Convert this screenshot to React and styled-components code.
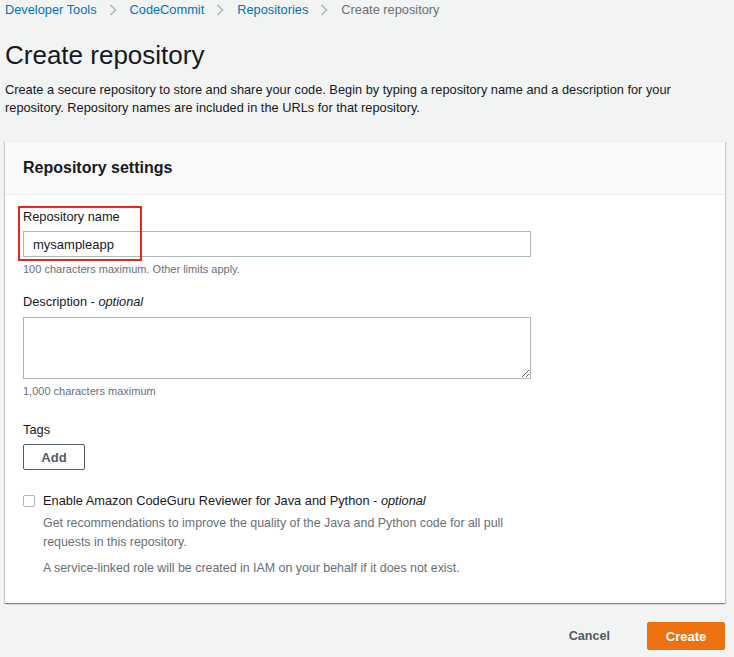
import React from "react";
import styled, { createGlobalStyle } from "styled-components";

const GlobalStyle = createGlobalStyle`
  html, body {
    margin: 0;
    padding: 0;
    background: #f2f3f3;
  }
  body {
    font-family: "Liberation Sans", Arial, sans-serif;
    color: #16191f;
  }
`;

function Chevron() {
  return (
    <svg width="8" height="12" viewBox="0 0 8 12" fill="none">
      <path d="M1.5 1l5 5-5 5" stroke="#aab7b8" strokeWidth="1.5" />
    </svg>
  );
}

function App() {
  const crumbs = ["Developer Tools", "CodeCommit", "Repositories"];
  return (
    <Page>
      <GlobalStyle />
      <Breadcrumbs>
        {crumbs.map((c) => (
          <React.Fragment key={c}>
            <CrumbLink>{c}</CrumbLink>
            <Sep>
              <Chevron />
            </Sep>
          </React.Fragment>
        ))}
        <CrumbCurrent>Create repository</CrumbCurrent>
      </Breadcrumbs>
      <Title>Create repository</Title>
      <Intro>
        Create a secure repository to store and share your code. Begin by
        typing a repository name and a description for your repository.
        Repository names are included in the URLs for that repository.
      </Intro>

      <Panel>
        <PanelHeader>
          <h2>Repository settings</h2>
        </PanelHeader>
        <PanelBody>
          <Highlight />
          <Label>Repository name</Label>
          <TextInput defaultValue="mysampleapp" />
          <Hint>100 characters maximum. Other limits apply.</Hint>

          <Label $top={15}>
            Description - <em>optional</em>
          </Label>
          <TextArea />
          <Hint>1,000 characters maximum</Hint>

          <Label $top={21}>Tags</Label>
          <SecondaryButton>Add</SecondaryButton>

          <CheckRow>
            <CheckBox />
            <CheckText>
              <Label>
                Enable Amazon CodeGuru Reviewer for Java and Python -{" "}
                <em>optional</em>
              </Label>
              <Note>
                Get recommendations to improve the quality of the Java and
                Python code for all pull requests in this repository.
              </Note>
              <Note $top={7}>
                A service-linked role will be created in IAM on your behalf if
                it does not exist.
              </Note>
            </CheckText>
          </CheckRow>
        </PanelBody>
      </Panel>

      <Actions>
        <LinkButton>Cancel</LinkButton>
        <PrimaryButton>Create</PrimaryButton>
      </Actions>
    </Page>
  );
}

export default App;

const Page = styled.div`
  width: 720px;
  padding: 0 0 0 5px;
`;

const Breadcrumbs = styled.nav`
  display: flex;
  align-items: center;
  font-size: 12.8px;
  line-height: 20px;
  height: 20px;
`;

const CrumbLink = styled.span`
  color: #0073bb;
`;

const CrumbCurrent = styled.span`
  color: #687078;
`;

const Sep = styled.span`
  display: flex;
  align-items: center;
  margin: 0 13px 0 12px;
`;

const Title = styled.h1`
  margin: 17px 0 0;
  font-size: 26px;
  line-height: 36px;
  font-weight: 400;
`;

const Intro = styled.p`
  margin: 8px 0 0;
  font-size: 12.8px;
  line-height: 18px;
`;

const Panel = styled.section`
  margin-top: 24px;
  background: #fff;
  border-top: 1px solid #eaeded;
  box-shadow: 0 1px 1px 0 rgba(0, 28, 36, 0.3),
    1px 1px 1px 0 rgba(0, 28, 36, 0.15), -1px 1px 1px 0 rgba(0, 28, 36, 0.15);
`;

const PanelHeader = styled.header`
  height: 52px;
  display: flex;
  align-items: center;
  padding: 0 18px;
  background: #fafafa;
  border-bottom: 1px solid #eaeded;
  h2 {
    margin: 0;
    font-size: 16px;
    font-weight: 700;
  }
`;

const PanelBody = styled.div`
  position: relative;
  padding: 12px 18px 25px;
`;

const Highlight = styled.div`
  position: absolute;
  left: 13px;
  top: 11px;
  width: 120px;
  height: 51px;
  border: 2px solid #e8271c;
  pointer-events: none;
`;

const Label = styled.div`
  margin-top: ${(p) => p.$top || 0}px;
  font-size: 12.8px;
  line-height: 20px;
  color: #16191f;
  em {
    font-style: italic;
  }
`;

const TextInput = styled.input`
  display: block;
  box-sizing: border-box;
  margin-top: 4px;
  width: 508px;
  height: 26px;
  padding: 0 9px;
  border: 1px solid #aab7b8;
  border-radius: 0;
  font-family: inherit;
  font-size: 13px;
  color: #16191f;
  outline: none;
`;

const TextArea = styled.textarea`
  display: block;
  box-sizing: border-box;
  margin-top: 5px;
  width: 508px;
  height: 62px;
  border: 1px solid #aab7b8;
  border-radius: 0;
  font-family: inherit;
  font-size: 13px;
  outline: none;
`;

const Hint = styled.div`
  margin-top: 4px;
  font-size: 11px;
  line-height: 16px;
  color: #687078;
`;

const SecondaryButton = styled.button`
  display: block;
  margin-top: 4px;
  width: 62px;
  height: 26px;
  background: #fff;
  border: 1px solid #545b64;
  border-radius: 2px;
  font-family: inherit;
  font-size: 13px;
  font-weight: 700;
  color: #545b64;
`;

const CheckRow = styled.div`
  display: flex;
  align-items: flex-start;
  gap: 8px;
  margin-top: 21px;
`;

const CheckBox = styled.span`
  flex: none;
  box-sizing: border-box;
  width: 12px;
  height: 12px;
  margin-top: 4px;
  border: 1px solid #aab7b8;
  border-radius: 2px;
  background: #fff;
`;

const CheckText = styled.div`
  width: 490px;
`;

const Note = styled.p`
  margin: ${(p) => p.$top || 3}px 0 0;
  font-size: 12.4px;
  line-height: 19px;
  color: #687078;
`;

const Actions = styled.div`
  display: flex;
  justify-content: flex-end;
  align-items: center;
  gap: 37px;
  margin-top: 19px;
`;

const LinkButton = styled.button`
  background: none;
  border: none;
  padding: 0;
  font-family: inherit;
  font-size: 12.6px;
  font-weight: 700;
  color: #545b64;
`;

const PrimaryButton = styled.button`
  box-sizing: border-box;
  width: 78px;
  height: 28px;
  background: #ec7211;
  border: 1px solid #ec7211;
  border-radius: 2px;
  font-family: inherit;
  font-size: 13px;
  font-weight: 700;
  color: #fff;
`;
